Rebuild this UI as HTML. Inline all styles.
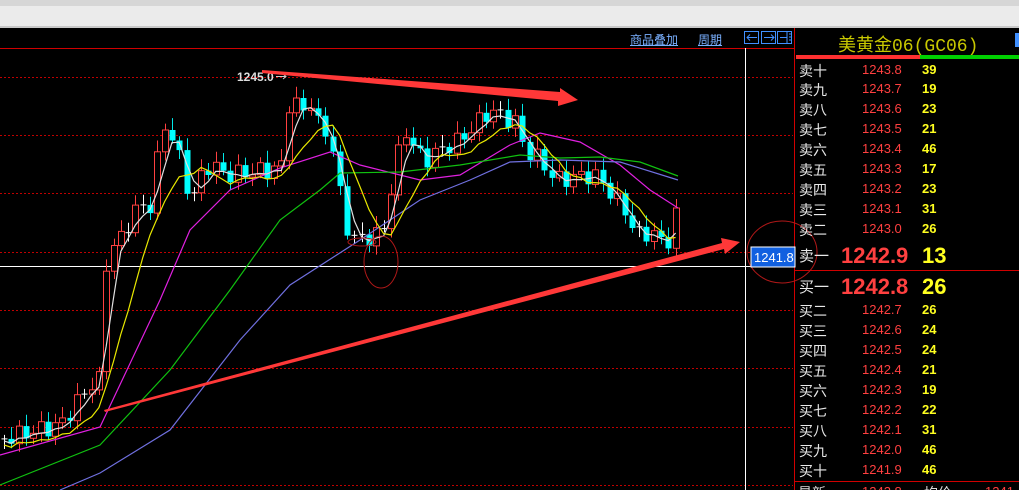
<!DOCTYPE html>
<html><head><meta charset="utf-8"><style>
html,body{margin:0;width:1019px;height:490px;overflow:hidden;background:#000}
body{position:relative;font-family:"Liberation Sans","Noto Sans CJK SC",sans-serif}
.top{position:absolute;left:0;top:0;width:1019px;height:28px;background:#ebebeb;border-top:6px solid #d6d6d6;box-sizing:border-box;border-bottom:2px solid #c8c8c8;z-index:2}
.t{position:absolute;white-space:nowrap}
.row{position:absolute;left:799px;width:200px;height:20px;font-size:14px;white-space:nowrap}
.row span{white-space:nowrap}
.row .n{position:absolute;left:0;color:#e8e8e8}
.row .p{position:absolute;left:63px;top:1px;color:#ff4040;font-size:13px}
.row .v{position:absolute;left:123px;top:1px;color:#ffff20;font-weight:bold;font-size:13px}
</style></head><body>
<div class="top"></div>
<svg id="s" width="1019" height="490" style="position:absolute;left:0;top:0">
<g stroke="#c00000" stroke-dasharray="2,2" stroke-width="1">
<line x1="0" y1="77.5" x2="793" y2="77.5"/><line x1="0" y1="135.5" x2="793" y2="135.5"/><line x1="0" y1="193.5" x2="793" y2="193.5"/><line x1="0" y1="252.5" x2="793" y2="252.5"/><line x1="0" y1="310.5" x2="793" y2="310.5"/><line x1="0" y1="368.5" x2="793" y2="368.5"/><line x1="0" y1="427.5" x2="793" y2="427.5"/><line x1="0" y1="485.5" x2="793" y2="485.5"/>
</g>
<line x1="0" y1="48.5" x2="794" y2="48.5" stroke="#d00000"/>
<line x1="794.5" y1="28" x2="794.5" y2="490" stroke="#d00000"/>
<line x1="745.5" y1="48" x2="745.5" y2="490" stroke="#fff"/>
<line x1="0" y1="266.5" x2="794" y2="266.5" stroke="#fff"/>
<line x1="794" y1="270.5" x2="1019" y2="270.5" stroke="#d00000"/>
<line x1="794" y1="481.5" x2="1019" y2="481.5" stroke="#d00000"/>
<rect x="796" y="55" width="124" height="4" fill="#ff3030"/><rect x="920" y="55" width="99" height="4" fill="#00d000"/>
<rect x="1015" y="33" width="4" height="14" fill="#4090ff"/>
<g fill="none" stroke="#4090ff"><rect x="744.5" y="31.5" width="14" height="12"/><rect x="761.5" y="31.5" width="14" height="12"/><rect x="777.5" y="31.5" width="14" height="12"/>
<path d="M747 37.5h10M750 34.5l-3 3 3 3M764 37.5h10M771 34.5l3 3-3 3M780 37.5h7M787 32v11M789 34h2M789 37h2M789 40h2"/></g>
<g id="c"></g>
<polyline fill="none" stroke="#e020e0" stroke-width="1.2" points="0,455 100,427 160,300 190,230 230,190 280,168 330,152 360,165 420,180 460,175 510,145 540,133 580,142 620,165 650,190 678,208"/>
<polyline fill="none" stroke="#10c010" stroke-width="1.2" points="0,485 100,445 170,370 230,290 280,220 320,190 340,173 400,172 460,165 520,155 560,158 600,157 640,162 678,176"/>
<polyline fill="none" stroke="#7070e0" stroke-width="1.2" points="60,490 100,473 170,430 240,340 290,285 360,240 420,200 470,180 510,162 560,160 620,162 678,180"/>
<g id="m"></g>
<text x="237" y="81" fill="#ddd" font-size="12" font-weight="bold" font-family="Liberation Sans">1245.0</text>
<path d="M276 76.5h10M283 74l3 2.5-3 2.5" stroke="#ccc" fill="none"/>
<polygon points="262,70 560,92 560,88 578,100 558,106 558,101 262,73" fill="#ff3838"/>
<polygon points="104,410 722,243 721,238 740,242 725,254 724,249 105,412" fill="#ff3838"/>
<ellipse cx="381" cy="262" rx="17" ry="26" fill="none" stroke="#b01818"/>
<ellipse cx="362" cy="242" rx="14" ry="4" fill="none" stroke="#b01818"/>
<ellipse cx="782" cy="252" rx="35" ry="31" fill="none" stroke="#b01818"/>
<rect x="751" y="247" width="44" height="20" fill="#1060e0" stroke="#fff"/>
<text x="754" y="262" fill="#fff" font-size="13" font-family="Liberation Sans">1241.8</text>
</svg>
<div class="t" style="left:630px;top:31px;font-size:12px;color:#7ab0ff;text-decoration:underline">商品叠加</div>
<div class="t" style="left:698px;top:31px;font-size:12px;color:#7ab0ff;text-decoration:underline">周期</div>
<div class="t" style="left:838px;top:31px;font-size:18px;color:#c8c800;font-family:'Liberation Mono','Noto Sans CJK SC',monospace">美黄金06(GC06)</div>
<div id="rows"></div>
<div class="t" style="left:798px;top:483px;font-size:14px;color:#ddd">最新</div>
<div class="t" style="left:862px;top:484px;font-size:13px;color:#ff4040">1242.8</div>
<div class="t" style="left:924px;top:483px;font-size:14px;color:#ddd">均价</div>
<div class="t" style="left:985px;top:484px;font-size:13px;color:#ff4040">1241</div>
<script>
var R=[["卖十","1243.8","39",61],["卖九","1243.7","19",80],["卖八","1243.6","23",100],["卖七","1243.5","21",120],["卖六","1243.4","46",140],["卖五","1243.3","17",160],["卖四","1243.2","23",180],["卖三","1243.1","31",200],["卖二","1243.0","26",220],["买二","1242.7","26",301],["买三","1242.6","24",321],["买四","1242.5","24",341],["买五","1242.4","21",361],["买六","1242.3","19",381],["买七","1242.2","22",401],["买八","1242.1","31",421],["买九","1242.0","46",441],["买十","1241.9","46",461]];
var h="";R.forEach(function(r){h+='<div class="row" style="top:'+r[3]+'px"><span class="n">'+r[0]+'</span><span class="p">'+r[1]+'</span><span class="v">'+r[2]+'</span></div>'});
h+='<div class="row" style="top:243px;font-size:15px"><span class="n" style="top:2px">卖一</span><span class="p" style="left:42px;top:0;font-size:22px;font-weight:bold">1242.9</span><span class="v" style="top:0;font-size:22px">13</span></div>';
h+='<div class="row" style="top:274px;font-size:15px"><span class="n" style="top:2px">买一</span><span class="p" style="left:42px;top:0;font-size:22px;font-weight:bold">1242.8</span><span class="v" style="top:0;font-size:22px">26</span></div>';
document.getElementById("rows").innerHTML=h;
var NS="http://www.w3.org/2000/svg";
function el(par,tag,at){var e=document.createElementNS(NS,tag);for(var k in at)e.setAttribute(k,at[k]);par.appendChild(e);return e;}
var K=[[0,440],[30,432],[60,425],[90,385],[100,380],[107,250],[120,240],[135,210],[150,205],[163,125],[175,140],[185,185],[195,195],[205,165],[215,168],[230,175],[250,172],[270,170],[283,165],[290,90],[300,115],[310,100],[318,125],[330,135],[340,195],[350,240],[360,238],[375,237],[385,225],[395,165],[405,130],[415,150],[425,160],[440,150],[460,140],[475,125],[490,110],[505,118],[515,122],[525,150],[540,160],[555,180],[570,178],[585,175],[600,178],[615,200],[625,210],[635,235],[650,232],[660,240],[670,240],[678,208]];
function f(x){for(var i=1;i<K.length;i++)if(x<=K[i][0]){var a=K[i-1],b=K[i];return a[1]+(b[1]-a[1])*(x-a[0])/(b[0]-a[0]);}return K[K.length-1][1];}
var g=document.getElementById("c"),cl=[],xs=[],prev=f(0);
for(var i=0;i<93;i++){var x=4+i*7.3;var c=f(x)+Math.sin(i*2.3)*9;if(i==92)c=208;cl.push(c);xs.push(x);
var o=prev,tp=Math.min(o,c),bt=Math.max(o,c),hi=tp-4-Math.abs(Math.sin(i*1.7))*8,lo=bt+3+Math.abs(Math.cos(i*1.3))*6;
var X=Math.round(x)+0.5;
if(bt-tp<2){el(g,"line",{x1:X,y1:hi.toFixed(1),x2:X,y2:lo.toFixed(1),stroke:"#fff"});el(g,"line",{x1:X-3,y1:c.toFixed(1),x2:X+3,y2:c.toFixed(1),stroke:"#fff"});}
else if(c>o){el(g,"line",{x1:X,y1:hi.toFixed(1),x2:X,y2:lo.toFixed(1),stroke:"#00e8e8"});el(g,"rect",{x:X-3,y:tp.toFixed(1),width:6,height:(bt-tp).toFixed(1),fill:"#00ffff"});}
else{el(g,"line",{x1:X,y1:hi.toFixed(1),x2:X,y2:lo.toFixed(1),stroke:"#ff4040"});el(g,"rect",{x:X-3,y:tp.toFixed(1),width:6,height:(bt-tp).toFixed(1),fill:"#000",stroke:"#ff4040"});}
prev=c;}
var m=document.getElementById("m");
function ma(n,col,off){var p=[];for(var i=0;i<cl.length;i++){var a=0,k=0;for(var j=Math.max(0,i-n+1);j<=i;j++){a+=cl[j];k++;}p.push(xs[i].toFixed(1)+","+(a/k+off).toFixed(1));}el(m,"polyline",{fill:"none",stroke:col,"stroke-width":"1.2",points:p.join(" ")});}
ma(3,"#e0e0e0",2);ma(7,"#e8e800",6);
</script>
</body></html>
